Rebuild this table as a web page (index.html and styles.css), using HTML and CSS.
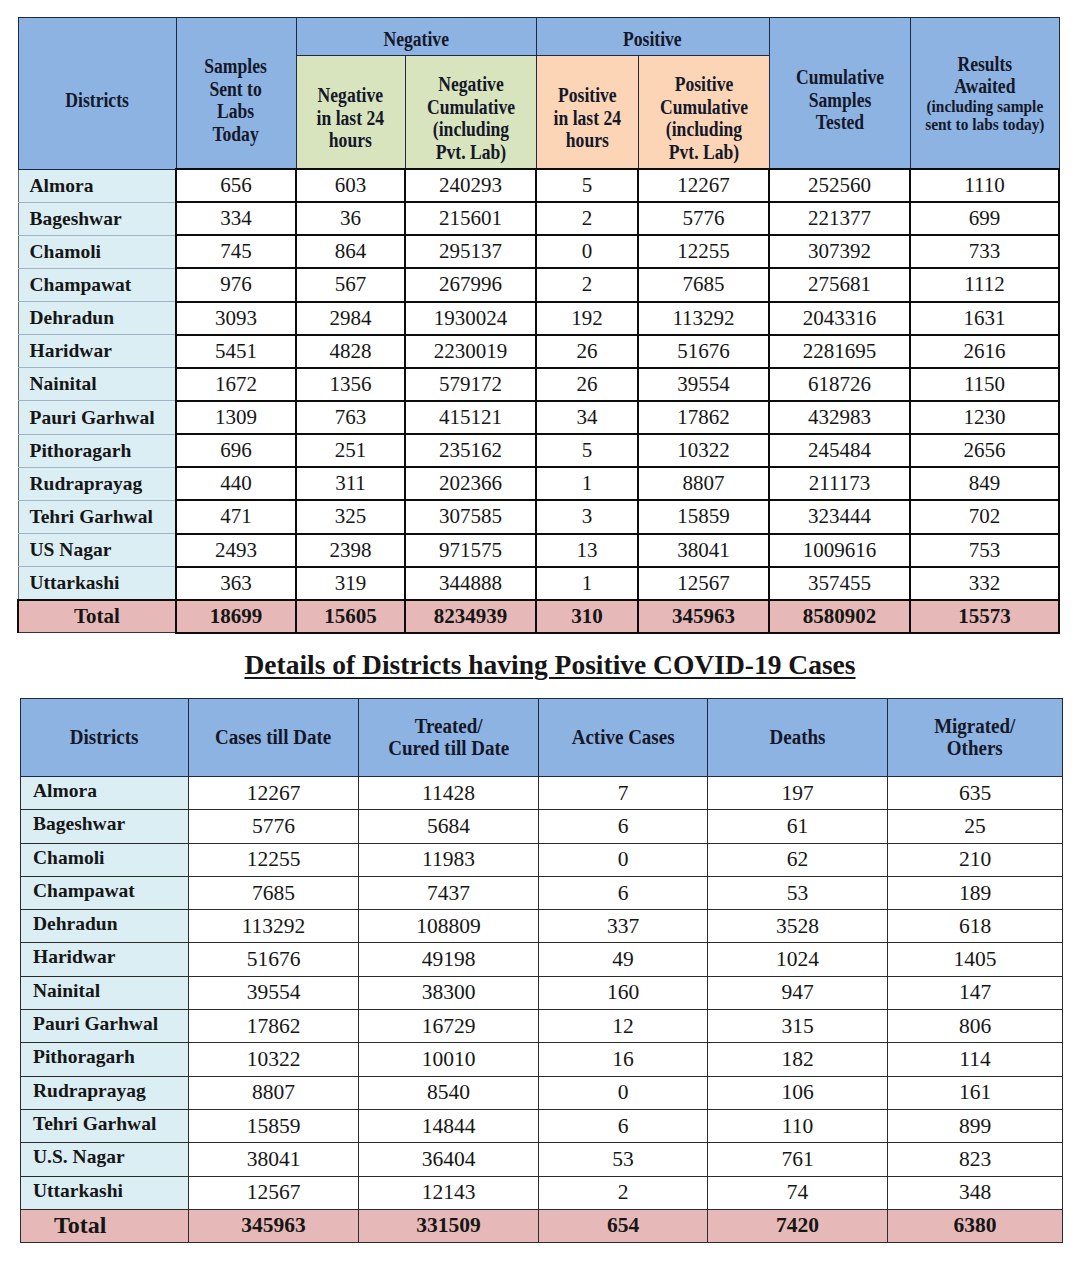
FILE: index.html
```html
<!DOCTYPE html>
<html>
<head>
<meta charset="utf-8">
<link rel="stylesheet" href="styles.css">
</head>
<body>
<div class="page">
<table class="t1">
<colgroup>
<col style="width:158px"><col style="width:120px"><col style="width:109px"><col style="width:131px"><col style="width:102px"><col style="width:131px"><col style="width:141px"><col style="width:149px">
</colgroup>
<thead>
<tr class="h1">
<th rowspan="2" class="blue span2"><span class="sx">Districts</span></th>
<th rowspan="2" class="blue span2"><span class="sx">Samples<br>Sent to<br>Labs<br>Today</span></th>
<th colspan="2" class="blue top"><span class="sx">Negative</span></th>
<th colspan="2" class="blue top"><span class="sx">Positive</span></th>
<th rowspan="2" class="blue span2"><span class="sx">Cumulative<br>Samples<br>Tested</span></th>
<th rowspan="2" class="blue span2 results"><span class="sx">Results<br>Awaited<br><span class="small">(including sample<br>sent to labs today)</span></span></th>
</tr>
<tr class="h2">
<th class="green"><span class="sx">Negative<br>in last 24<br>hours</span></th>
<th class="green"><span class="sx">Negative<br>Cumulative<br>(including<br>Pvt. Lab)</span></th>
<th class="orange"><span class="sx">Positive<br>in last 24<br>hours</span></th>
<th class="orange"><span class="sx">Positive<br>Cumulative<br>(including<br>Pvt. Lab)</span></th>
</tr>
</thead>
<tbody>
<tr><td class="dist">Almora</td><td>656</td><td>603</td><td>240293</td><td>5</td><td>12267</td><td>252560</td><td>1110</td></tr>
<tr><td class="dist">Bageshwar</td><td>334</td><td>36</td><td>215601</td><td>2</td><td>5776</td><td>221377</td><td>699</td></tr>
<tr><td class="dist">Chamoli</td><td>745</td><td>864</td><td>295137</td><td>0</td><td>12255</td><td>307392</td><td>733</td></tr>
<tr><td class="dist">Champawat</td><td>976</td><td>567</td><td>267996</td><td>2</td><td>7685</td><td>275681</td><td>1112</td></tr>
<tr><td class="dist">Dehradun</td><td>3093</td><td>2984</td><td>1930024</td><td>192</td><td>113292</td><td>2043316</td><td>1631</td></tr>
<tr><td class="dist">Haridwar</td><td>5451</td><td>4828</td><td>2230019</td><td>26</td><td>51676</td><td>2281695</td><td>2616</td></tr>
<tr><td class="dist">Nainital</td><td>1672</td><td>1356</td><td>579172</td><td>26</td><td>39554</td><td>618726</td><td>1150</td></tr>
<tr><td class="dist">Pauri Garhwal</td><td>1309</td><td>763</td><td>415121</td><td>34</td><td>17862</td><td>432983</td><td>1230</td></tr>
<tr><td class="dist">Pithoragarh</td><td>696</td><td>251</td><td>235162</td><td>5</td><td>10322</td><td>245484</td><td>2656</td></tr>
<tr><td class="dist">Rudraprayag</td><td>440</td><td>311</td><td>202366</td><td>1</td><td>8807</td><td>211173</td><td>849</td></tr>
<tr><td class="dist">Tehri Garhwal</td><td>471</td><td>325</td><td>307585</td><td>3</td><td>15859</td><td>323444</td><td>702</td></tr>
<tr><td class="dist">US Nagar</td><td>2493</td><td>2398</td><td>971575</td><td>13</td><td>38041</td><td>1009616</td><td>753</td></tr>
<tr><td class="dist">Uttarkashi</td><td>363</td><td>319</td><td>344888</td><td>1</td><td>12567</td><td>357455</td><td>332</td></tr>
<tr class="total"><td class="tlabel">Total</td><td>18699</td><td>15605</td><td>8234939</td><td>310</td><td>345963</td><td>8580902</td><td>15573</td></tr>
</tbody>
</table>

<h2 class="title"><span>Details of Districts having Positive COVID-19 Cases</span></h2>

<table class="t2">
<colgroup>
<col style="width:168px"><col style="width:170px"><col style="width:180px"><col style="width:169px"><col style="width:180px"><col style="width:175px">
</colgroup>
<thead>
<tr>
<th><span class="sx2">Districts</span></th>
<th><span class="sx2">Cases till Date</span></th>
<th><span class="sx2">Treated/<br>Cured till Date</span></th>
<th><span class="sx2">Active Cases</span></th>
<th><span class="sx2">Deaths</span></th>
<th><span class="sx2">Migrated/<br>Others</span></th>
</tr>
</thead>
<tbody>
<tr><td class="dist">Almora</td><td>12267</td><td>11428</td><td>7</td><td>197</td><td>635</td></tr>
<tr><td class="dist">Bageshwar</td><td>5776</td><td>5684</td><td>6</td><td>61</td><td>25</td></tr>
<tr><td class="dist">Chamoli</td><td>12255</td><td>11983</td><td>0</td><td>62</td><td>210</td></tr>
<tr><td class="dist">Champawat</td><td>7685</td><td>7437</td><td>6</td><td>53</td><td>189</td></tr>
<tr><td class="dist">Dehradun</td><td>113292</td><td>108809</td><td>337</td><td>3528</td><td>618</td></tr>
<tr><td class="dist">Haridwar</td><td>51676</td><td>49198</td><td>49</td><td>1024</td><td>1405</td></tr>
<tr><td class="dist">Nainital</td><td>39554</td><td>38300</td><td>160</td><td>947</td><td>147</td></tr>
<tr><td class="dist">Pauri Garhwal</td><td>17862</td><td>16729</td><td>12</td><td>315</td><td>806</td></tr>
<tr><td class="dist">Pithoragarh</td><td>10322</td><td>10010</td><td>16</td><td>182</td><td>114</td></tr>
<tr><td class="dist">Rudraprayag</td><td>8807</td><td>8540</td><td>0</td><td>106</td><td>161</td></tr>
<tr><td class="dist">Tehri Garhwal</td><td>15859</td><td>14844</td><td>6</td><td>110</td><td>899</td></tr>
<tr><td class="dist">U.S. Nagar</td><td>38041</td><td>36404</td><td>53</td><td>761</td><td>823</td></tr>
<tr><td class="dist">Uttarkashi</td><td>12567</td><td>12143</td><td>2</td><td>74</td><td>348</td></tr>
<tr class="total"><td class="tlabel">Total</td><td>345963</td><td>331509</td><td>654</td><td>7420</td><td>6380</td></tr>
</tbody>
</table>
</div>
</body>
</html>
```

FILE: styles.css
```css
html, body {
  margin: 0;
  padding: 0;
  background: #ffffff;
}
body {
  font-family: "Liberation Serif", "Times New Roman", serif;
  color: #161616;
}
.page {
  width: 1080px;
  height: 1281px;
  padding-top: 17px;
  box-sizing: border-box;
  overflow: hidden;
}
table {
  border-collapse: collapse;
  table-layout: fixed;
}
.sx, .sx2 {
  display: inline-block;
  white-space: nowrap;
}
.sx { transform: scaleX(0.88); }
.sx2 { transform: scaleX(0.95); }

/* ---------- table 1 ---------- */
.t1 {
  margin-left: 17px;
  width: 1041px;
}
.t1 th {
  font-weight: bold;
  font-size: 20px;
  line-height: 22.5px;
  padding: 0;
  text-align: center;
  vertical-align: middle;
  border: 1px solid #1e2a44;
  color: #15182a;
}
.t1 th.top {
  height: 31px;
  padding-top: 6px;
}
.t1 .h2 th {
  height: 100px;
  padding-top: 12px;
}
.t1 th.span2 {
  padding-top: 14px;
}
.t1 th.results {
  padding-top: 0;
  line-height: 22px;
}
.t1 .small {
  font-size: 17.5px;
  line-height: 18px;
  display: inline-block;
}
.blue { background: #8db3e2; }
.green { background: #d8e4bd; }
.orange { background: #fbd5b6; }
.t1 td {
  border: 2px solid #0c0c0c;
  height: 31.15px;
  padding: 0;
  font-size: 21px;
  text-align: center;
  vertical-align: middle;
  background: #fff;
}
.t1 td.dist {
  background: #dbeef4;
  text-align: left;
  padding-left: 11px;
  font-weight: bold;
  font-size: 19.5px;
  border-top: 1px solid #9fb3c4;
  border-bottom: 1px solid #9fb3c4;
  border-left: 1px solid #6a6a6a;
}
.t1 .total td {
  background: #e6b9b8;
  font-weight: bold;
}
.t1 .total td.tlabel {
  background: #e6b9b8;
  text-align: center;
  padding-left: 0;
  border-bottom: 1px solid #333;
  border-top: 2px solid #0c0c0c;
}

/* ---------- title ---------- */
.title {
  margin: 14px 0 16px 0;
  height: 34px;
  text-align: center;
  font-size: 27.5px;
  font-weight: bold;
  line-height: 34px;
  padding-left: 20px;
}
.title span {
  text-decoration: underline;
  text-decoration-thickness: 2px;
  text-underline-offset: 3px;
  white-space: nowrap;
}

/* ---------- table 2 ---------- */
.t2 {
  margin-left: 20px;
  width: 1042px;
}
.t2 th {
  background: #8db3e2;
  font-weight: bold;
  font-size: 20px;
  line-height: 22px;
  height: 77px;
  padding: 0;
  text-align: center;
  vertical-align: middle;
  border: 1px solid #1e2a44;
  color: #15182a;
}
.t2 td {
  border: 1px solid #2c2c2c;
  height: 32.3px;
  padding: 0;
  font-size: 21.5px;
  text-align: center;
  vertical-align: middle;
  background: #fff;
}
.t2 td.dist {
  background: #dbeef4;
  text-align: left;
  padding-left: 12px;
  font-weight: bold;
  font-size: 19.5px;
  line-height: 24px;
  vertical-align: top;
  padding-top: 2px;
  height: 30.3px;
}
.t2 .total td {
  background: #e6b9b8;
  font-weight: bold;
}
.t2 .total td.tlabel {
  text-align: left;
  padding-left: 33px;
  padding-top: 0;
  height: 32.3px;
  vertical-align: middle;
  font-size: 24px;
}
```
